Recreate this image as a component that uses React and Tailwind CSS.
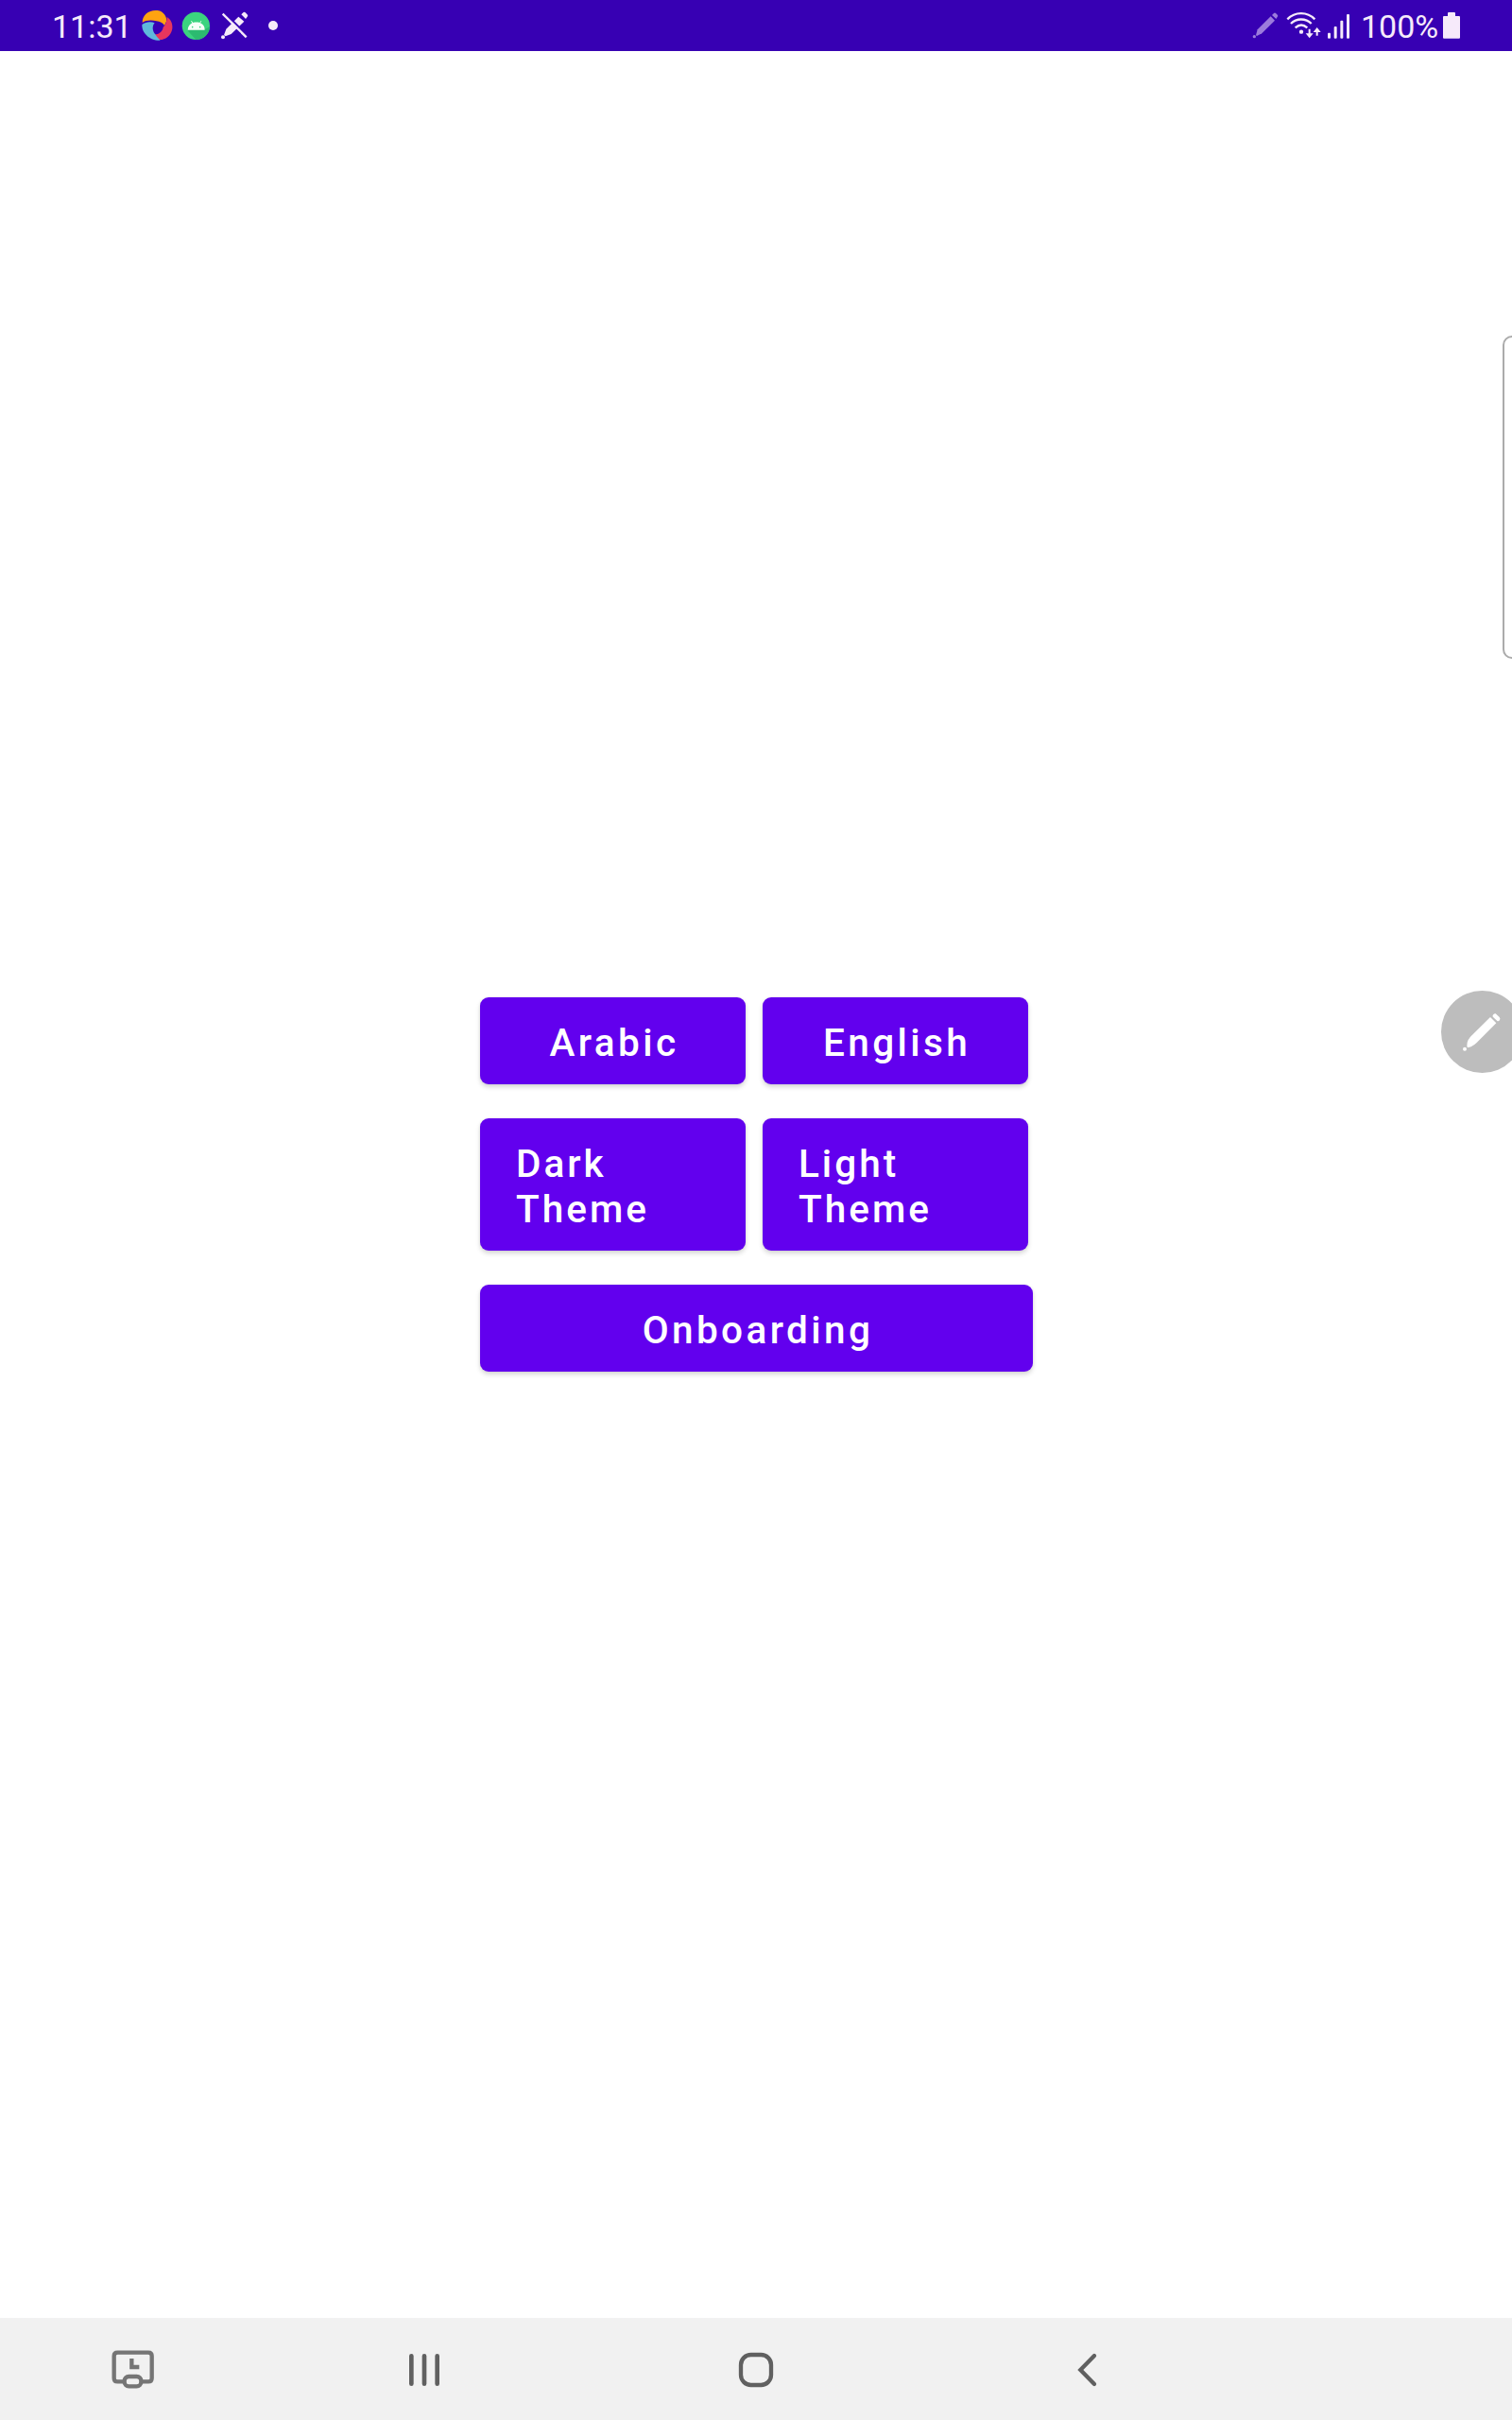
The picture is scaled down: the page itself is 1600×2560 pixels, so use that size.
function StatusBar() {
  return (
    <header className="flex h-[54px] w-full items-start bg-[#3700b3] text-[#f6eafa]">
      <span className="ml-[55px] mt-[8px] w-[94px] whitespace-nowrap text-[34px] leading-[40px]">11:31</span>
      <svg className="mt-[10px] h-[34px] w-[34px] shrink-0" viewBox="327 30 102 102">
        <path d="M332 72 C331 46 355 30 380 33 C400 36 411 54 408 68 L402 81 C397 73 388 68 377 67 C361 63 343 64 332 72Z" fill="#ffa310" />
        <path d="M410 54 C424 62 430 79 426 95 C421 114 404 127 386 126 C377 123 371 118 369 109 C382 111 396 101 398 86 C407 78 410 66 410 54Z" fill="#e8365d" />
        <path d="M331 78 C344 68 360 68 371 73 C362 83 364 99 373 109 C377 116 382 121 389 128 C360 131 329 107 331 78Z" fill="#5fb9dc" />
      </svg>
      <svg className="ml-[9px] mt-[12px] h-[31px] w-[31px] shrink-0" viewBox="456 36 93 93">
        <circle cx="502" cy="82" r="44" fill="#3bd37f" />
        <path d="M476 94 L530 94 L546 84 C546 107 527 126 502 126 L478 100Z" fill="#2cba70" />
        <path d="M476 95 C477 83 482 77 490 73 L486 67 L488 66 L493 72 C499 70 508 70 514 72 L518 66 L520 67 L516 73 C525 77 530 84 530 95Z" fill="#f7fff9" />
        <circle cx="491" cy="86" r="2.4" fill="#3bd37f" />
        <circle cx="515" cy="86" r="2.4" fill="#3bd37f" />
      </svg>
      <svg className="ml-[10px] mt-[12px] h-[31px] w-[31px] shrink-0" viewBox="579 36 93 93" fill="#f6eafa">
        <path d="M591 111 L598 92 L637 53 L655 68 L614 108 L596 115Z" />
        <path d="M646 46 L653 39 Q656 37 659 40 L666 47 Q668 50 665 53 L660 60Z" />
        <circle cx="588" cy="118" r="6" />
        <path d="M592 40 L667 114" stroke="#3700b3" strokeWidth="6" />
        <path d="M587 44 L662 118" stroke="#f6eafa" strokeWidth="7" />
      </svg>
      <span className="ml-[20px] mt-[22px] h-[10px] w-[10px] rounded-full bg-[#f6eafa]" />

      <svg className="ml-auto mt-[12px] h-[30px] w-[28px] shrink-0" viewBox="45 36 84 90" fill="#9c7bdc">
        <path d="M57 112 L62 94 L104 52 L117 65 L76 106 L60 114Z" />
        <path d="M108 48 L114 42 Q117 39 120 42 L126 48 Q128 51 125 54 L121 60Z" />
        <circle cx="52" cy="116" r="5" />
      </svg>
      <svg className="ml-[8px] mt-[12px] h-[30px] w-[38px] shrink-0" viewBox="153 36 114 90" fill="none" stroke="#f6eafa" strokeWidth="7">
        <path d="M157 61 C181 36 220 36 244 61" />
        <path d="M168 75 C186 57 215 57 233 75" />
        <path d="M182 88 C194 77 208 77 220 88" />
        <circle cx="201" cy="101" r="6.5" fill="#f6eafa" stroke="none" />
        <path d="M227 92 V112 M251 113 V95" strokeWidth="6" />
        <path d="M215 106 H239 L227 121Z M239 102 H263 L251 87Z" fill="#f6eafa" stroke="none" />
      </svg>
      <svg className="ml-[4px] mt-[14px] h-[28px] w-[26px] shrink-0" viewBox="279 42 78 84" fill="#f6eafa">
        <rect x="285" y="104" width="9" height="18" rx="3" />
        <rect x="305" y="84" width="9" height="38" rx="3" />
        <rect x="325" y="65" width="9" height="57" rx="3" />
        <rect x="345" y="45" width="9" height="77" rx="3" />
      </svg>
      <span className="ml-[11px] mt-[8px] w-[86px] whitespace-nowrap text-[34px] leading-[40px]">100%</span>
      <svg className="mr-[54px] mt-[12px] h-[30px] w-[20px] shrink-0" viewBox="648 36 60 90" fill="#f6eafa">
        <path d="M654 51 H666 V42 Q666 39 669 39 H687 Q690 39 690 42 V51 H702 Q705 51 705 54 V119 Q705 122 702 122 H654 Q651 122 651 119 V54 Q651 51 654 51Z" />
      </svg>
    </header>
  );
}

function Button({ children, className }) {
  return (
    <button
      className={`flex items-center rounded-[9px] bg-[#6200ee] pt-[4px] text-left text-[40.5px] font-medium leading-[48px] text-white shadow-[0_3px_5px_rgba(0,0,0,0.16),0_0_3px_rgba(0,0,0,0.06)] ${className}`}
    >
      {children}
    </button>
  );
}

function NavigationBar() {
  return (
    <nav className="flex h-[108px] w-full items-start bg-[#f1f1f1]">
      <svg className="ml-[116px] mt-[30px] h-[46px] w-[50px]" viewBox="78 156 150 138" fill="none" stroke="#757575" strokeWidth="13">
        <path d="M124 268 H103 Q92 268 92 257 V187 Q92 176 103 176 H201 Q212 176 212 187 V257 Q212 268 201 268 H179" />
        <path d="M148 195 V222 H172" />
        <rect x="125" y="252" width="53" height="31" rx="14" />
      </svg>
      <svg className="ml-[263px] mt-[34px] h-[42px] w-[40px]" viewBox="1017 168 120 126" stroke="#606060" strokeWidth="14" strokeLinecap="round">
        <path d="M1036 187 V275 M1077 187 V275 M1118 187 V275" />
      </svg>
      <svg className="ml-[311px] mt-[35px] h-[40px] w-[40px]" viewBox="60 171 120 120" fill="none" stroke="#606060" strokeWidth="13">
        <rect x="72" y="183" width="96" height="96" rx="32" />
      </svg>
      <svg className="ml-[316px] mt-[34px] h-[42px] w-[30px]" viewBox="1128 168 90 126" fill="none" stroke="#606060" strokeWidth="13" strokeLinecap="round">
        <path d="M1194 186 L1150 231 L1194 276" />
      </svg>
    </nav>
  );
}

export default function App() {
  return (
    <div className="relative flex h-[2560px] w-[1600px] flex-col overflow-hidden bg-white font-['Roboto',sans-serif]">
      <StatusBar />
      <main className="flex flex-1 flex-col items-start gap-[36px] pl-[508px] pt-[1001px]">
        <div className="flex gap-[18px]">
          <Button className="h-[92px] w-[281px] justify-center pl-[3px] tracking-[3.4px]">Arabic</Button>
          <Button className="h-[92px] w-[281px] justify-center pl-[3px] tracking-[3.4px]">English</Button>
        </div>
        <div className="flex gap-[18px]">
          <Button className="h-[140px] w-[281px] px-[38px] tracking-[3px]">Dark Theme</Button>
          <Button className="h-[140px] w-[281px] px-[38px] tracking-[3px]">Light Theme</Button>
        </div>
        <Button className="h-[92px] w-[585px] justify-center pl-[3px] tracking-[3.4px]">Onboarding</Button>
      </main>
      <NavigationBar />

      <div className="absolute right-[-12px] top-[355px] h-[342px] w-[22px] rounded-[10px] border-2 border-[#ababab] bg-white" />
      <button className="absolute left-[1525px] top-[1048px] h-[87px] w-[87px] rounded-full bg-[#bdbdbd]" aria-label="Edit">
        <svg className="h-[87px] w-[87px]" viewBox="75 54 261 261" fill="#fff">
          <path d="M157 230 L158 218 Q161 208 168 200 L231 138 L250 157 L188 219 Q180 227 170 232 L159 235Z" />
          <path d="M239 132 Q243 125 248 127 L260 138 Q264 142 261 147 Q258 152 253 150 L241 139 Q237 136 239 132Z" />
          <circle cx="150" cy="239" r="6" />
        </svg>
      </button>
    </div>
  );
}
